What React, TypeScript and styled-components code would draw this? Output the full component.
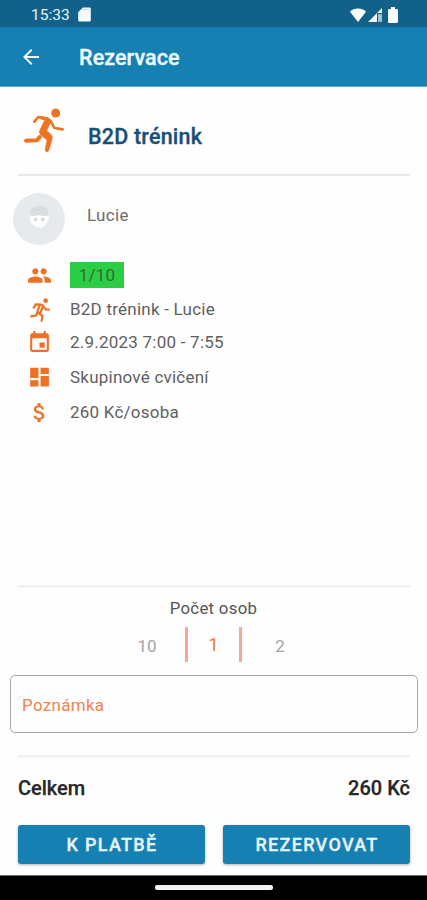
import React from 'react';
import styled, { createGlobalStyle } from 'styled-components';
import { MdArrowBack, MdPeople, MdEvent, MdDashboard, MdAttachMoney } from 'react-icons/md';

const GlobalStyle = createGlobalStyle`
  * { box-sizing: border-box; }
  body { margin: 0; background: #fefefe; font-family: Roboto, "Liberation Sans", sans-serif; }
`;

const Screen = styled.div`
  width: 427px;
  height: 900px;
  display: flex;
  flex-direction: column;
  background: #fefefe;
  overflow: hidden;
`;

const StatusBar = styled.header`
  height: 27px;
  flex: none;
  display: flex;
  align-items: center;
  padding: 2px 29px 0 31px;
  background: #12618a;
  color: #e8f3f9;
`;

const Clock = styled.span`
  font-size: 15.5px;
  line-height: 20px;
  width: 47px;
  padding-top: 1px;
`;

const StatusIcons = styled.div`
  margin-left: auto;
  display: flex;
  align-items: center;
  gap: 2px;
  svg:last-child { margin-left: 3px; }
`;

const AppBar = styled.div`
  height: 60px;
  flex: none;
  display: flex;
  align-items: center;
  padding: 3px 19px 0;
  background: #1680b3;
  border-bottom: 1px solid #60a9cc;
  color: #eef8fd;
  svg { margin-top: -3px; }
`;

const Title = styled.h1`
  margin: 0 0 0 36px;
  font-size: 21.5px;
  font-weight: 500;
  line-height: 26px;
  letter-spacing: 0.1px;
  -webkit-text-stroke: 0.35px currentColor;
`;

const Main = styled.main`
  flex: 1;
  display: flex;
  flex-direction: column;
`;

const Lesson = styled.section`
  height: 87px;
  display: flex;
  align-items: flex-start;
  padding: 15px 18px 0;
  color: #ee7422;
`;

const LessonName = styled.h2`
  margin: 22px 0 0 18px;
  font-size: 21.5px;
  line-height: 26px;
  font-weight: 500;
  letter-spacing: 0.2px;
  color: #184e77;
  -webkit-text-stroke: 0.3px currentColor;
`;

const Divider = styled.hr<{ $thick?: boolean }>`
  flex: none;
  width: 392px;
  height: ${(p) => (p.$thick ? 3 : 2)}px;
  margin: 0 0 0 18px;
  border: 0;
  background: ${(p) => (p.$thick ? '#f2f2f2' : '#e8e9ea')};
`;

const Trainer = styled.section`
  height: 82px;
  display: flex;
  align-items: flex-start;
  padding: 17px 13px 0;
`;

const TrainerName = styled.span`
  margin: 11px 0 0 22px;
  font-size: 17px;
  line-height: 22px;
  letter-spacing: 0.3px;
  color: #6c6c6c;
`;

const Details = styled.ul`
  list-style: none;
  margin: 0;
  padding: 0 0 0 27px;
  flex: 1;
`;

const DetailRow = styled.li<{ $height?: number }>`
  height: ${(p) => p.$height ?? 34}px;
  display: flex;
  align-items: center;
  color: #5f5f5f;
  font-size: 17px;
  letter-spacing: 0.23px;
`;

const IconSlot = styled.span`
  width: 25px;
  margin-right: 18px;
  display: flex;
  justify-content: center;
  color: #ed7125;
`;

const Capacity = styled.span`
  width: 54px;
  height: 26px;
  line-height: 27px;
  text-align: center;
  background: #2bce43;
  color: #35683a;
`;

const Persons = styled.section`
  height: 87px;
  display: flex;
  flex-direction: column;
  align-items: center;
  padding-top: 9px;
`;

const PersonsLabel = styled.span`
  font-size: 16.8px;
  line-height: 22px;
  letter-spacing: 0.3px;
  color: #555;
`;

const Picker = styled.div`
  margin-top: 8px;
  height: 35px;
  display: grid;
  grid-template-columns: 76px 57px 76px;
  align-items: stretch;
`;

const PickerItem = styled.span<{ $selected?: boolean }>`
  display: flex;
  align-items: center;
  justify-content: center;
  font-size: ${(p) => (p.$selected ? 18 : 17)}px;
  padding-top: ${(p) => (p.$selected ? 0 : 2)}px;
  color: ${(p) => (p.$selected ? '#f07a2c' : '#a5a5a5')};
  border: solid #f5a898;
  border-width: ${(p) => (p.$selected ? '0 3px' : '0')};
`;

const NoteField = styled.label`
  height: 58px;
  margin: 0 9px 22px 10px;
  padding: 1px 11px 0;
  display: flex;
  align-items: center;
  border: 1px solid #a5a5a5;
  border-radius: 5px;
  font-size: 17px;
  letter-spacing: 0.3px;
  color: #f28350;
`;

const Total = styled.div`
  height: 67px;
  padding: 0 17px 7px 18px;
  display: flex;
  align-items: center;
  justify-content: space-between;
  font-size: 20px;
  font-weight: 500;
  color: #272727;
  -webkit-text-stroke: 0.25px currentColor;
`;

const Actions = styled.div`
  height: 50px;
  padding: 0 17px 0 18px;
  display: grid;
  grid-template-columns: 187px 187px;
  justify-content: space-between;
  align-items: start;
`;

const Button = styled.button`
  height: 39px;
  padding: 1px 0 0 1px;
  border: 0;
  border-radius: 3px;
  background: #1680b3;
  box-shadow: 0 1px 3px rgba(0, 0, 0, 0.3);
  color: #e9f5fb;
  font: 500 18px/24px Roboto, "Liberation Sans", sans-serif;
  letter-spacing: 1.3px;
  -webkit-text-stroke: 0.3px currentColor;
`;

const NavigationBar = styled.footer`
  height: 25px;
  flex: none;
  display: flex;
  justify-content: center;
  align-items: center;
  background: #000;
  border-top: 1px solid #666;
`;

const HomeHandle = styled.span`
  width: 118px;
  height: 5px;
  margin-top: -1px;
  border-radius: 2px;
  background: #f3f3f3;
`;

const SdCard = () => (
  <svg width="13" height="15" viewBox="0 0 13 15" fill="#f4f9fc">
    <path d="M5 .5h6.5A1.3 1.3 0 0 1 12.8 2v11a1.4 1.4 0 0 1-1.4 1.5H1.6A1.4 1.4 0 0 1 .2 13V5z" />
    <path d="M4.500 2.500h7" stroke="#b8d2e0" strokeWidth=".8" />
  </svg>
);

const Wifi = () => (
  <svg width="16" height="14" viewBox="0 0 16 14" fill="#fff">
    <path d="M8 14 0 3.8Q3.2.5 8 .5t8 3.3z" />
  </svg>
);

const Signal = () => (
  <svg width="15" height="14" viewBox="0 0 15 14">
    <path d="M0 14 14 0v5H9v9z" fill="#f2f7fa" />
    <path d="M10 6h4v8h-4z" fill="#8db3c8" />
    <path d="m10.5 7 3 6m0-6-3 6" stroke="#b9d0dd" />
  </svg>
);

const Battery = () => (
  <svg width="10" height="16" viewBox="0 0 10 16" fill="#fff">
    <path d="M3 0h4v2h1.6Q10 2 10 3.4v11Q10 16 8.5 16h-7Q0 16 0 14.4v-11Q0 2 1.4 2H3z" />
  </svg>
);

const RunnerLogo = () => (
  <svg width="52" height="56" viewBox="0 0 156 168" fill="none" stroke="currentColor" strokeLinecap="round" strokeLinejoin="round">
    <circle cx="113" cy="33" r="13.500" fill="currentColor" stroke="none" />
    <path d="M49 59 61 45 88 50 98 57 109 78 134 82" strokeWidth="8" />
    <path d="M70 44Q94 44 99 58L86 86Q104 98 103 109L92 146Q86 154 81 145L87 114 68 99Q61 92 67 82L80 55 67 50Z" fill="currentColor" strokeWidth="2" />
    <path d="M65 105 57 115 24 116" strokeWidth="12" />
  </svg>
);

const RunnerIcon = () => (
  <svg width="25" height="25" viewBox="9 9 75 75" fill="none" stroke="currentColor" strokeWidth="6.500" strokeLinejoin="round">
    <circle cx="65" cy="20" r="7" fill="currentColor" stroke="none" />
    <path d="M28 43 35 31 52 32 57 35 65 46 77 47" />
    <path d="M48 32 41 50Q39 55 45 58L56 66 52 83M57 36 50 54 47 58" />
    <path d="M41 55 35 65 19 67" />
  </svg>
);

const Avatar = () => (
  <svg width="52" height="52" viewBox="0 0 52 52">
    <circle cx="26" cy="26" r="26" fill="#e7eaed" />
    <path d="M17 23v-4q1-6.500 9-6.500 9 .5 9 6.500v4z" fill="#d9dee2" />
    <path d="M17 22.500q4 1 9-.5 5 1.500 9.500.5 1 3-.8 6-2.500 6-8.700 6.200-6-.7-8.500-6.200-1.300-3-.5-6z" fill="#fdfdfd" />
    <circle cx="22.500" cy="26.500" r="1.800" fill="#d2d8dd" />
    <circle cx="29.800" cy="26.500" r="1.800" fill="#d2d8dd" />
  </svg>
);

const App = () => (
  <>
    <GlobalStyle />
    <Screen>
      <StatusBar>
        <Clock>15:33</Clock>
        <SdCard />
        <StatusIcons>
          <Wifi />
          <Signal />
          <Battery />
        </StatusIcons>
      </StatusBar>
      <AppBar>
        <MdArrowBack size={24} />
        <Title>Rezervace</Title>
      </AppBar>
      <Main>
        <Lesson>
          <RunnerLogo />
          <LessonName>B2D trénink</LessonName>
        </Lesson>
        <Divider />
        <Trainer>
          <Avatar />
          <TrainerName>Lucie</TrainerName>
        </Trainer>
        <Details>
          <DetailRow>
            <IconSlot><MdPeople size={25} /></IconSlot>
            <Capacity>1/10</Capacity>
          </DetailRow>
          <DetailRow>
            <IconSlot><RunnerIcon /></IconSlot>
            B2D trénink - Lucie
          </DetailRow>
          <DetailRow $height={32}>
            <IconSlot><MdEvent size={25} /></IconSlot>
            2.9.2023 7:00 - 7:55
          </DetailRow>
          <DetailRow $height={37}>
            <IconSlot><MdDashboard size={26} /></IconSlot>
            Skupinové cvičení
          </DetailRow>
          <DetailRow $height={34}>
            <IconSlot><MdAttachMoney size={25} /></IconSlot>
            260 Kč/osoba
          </DetailRow>
        </Details>
        <Divider $thick />
        <Persons>
          <PersonsLabel>Počet osob</PersonsLabel>
          <Picker>
            <PickerItem>10</PickerItem>
            <PickerItem $selected>1</PickerItem>
            <PickerItem>2</PickerItem>
          </Picker>
        </Persons>
        <NoteField>Poznámka</NoteField>
        <Divider $thick />
        <Total>
          <span>Celkem</span>
          <span>260 Kč</span>
        </Total>
        <Actions>
          <Button>K PLATBĚ</Button>
          <Button>REZERVOVAT</Button>
        </Actions>
      </Main>
      <NavigationBar><HomeHandle /></NavigationBar>
    </Screen>
  </>
);

export default App;
